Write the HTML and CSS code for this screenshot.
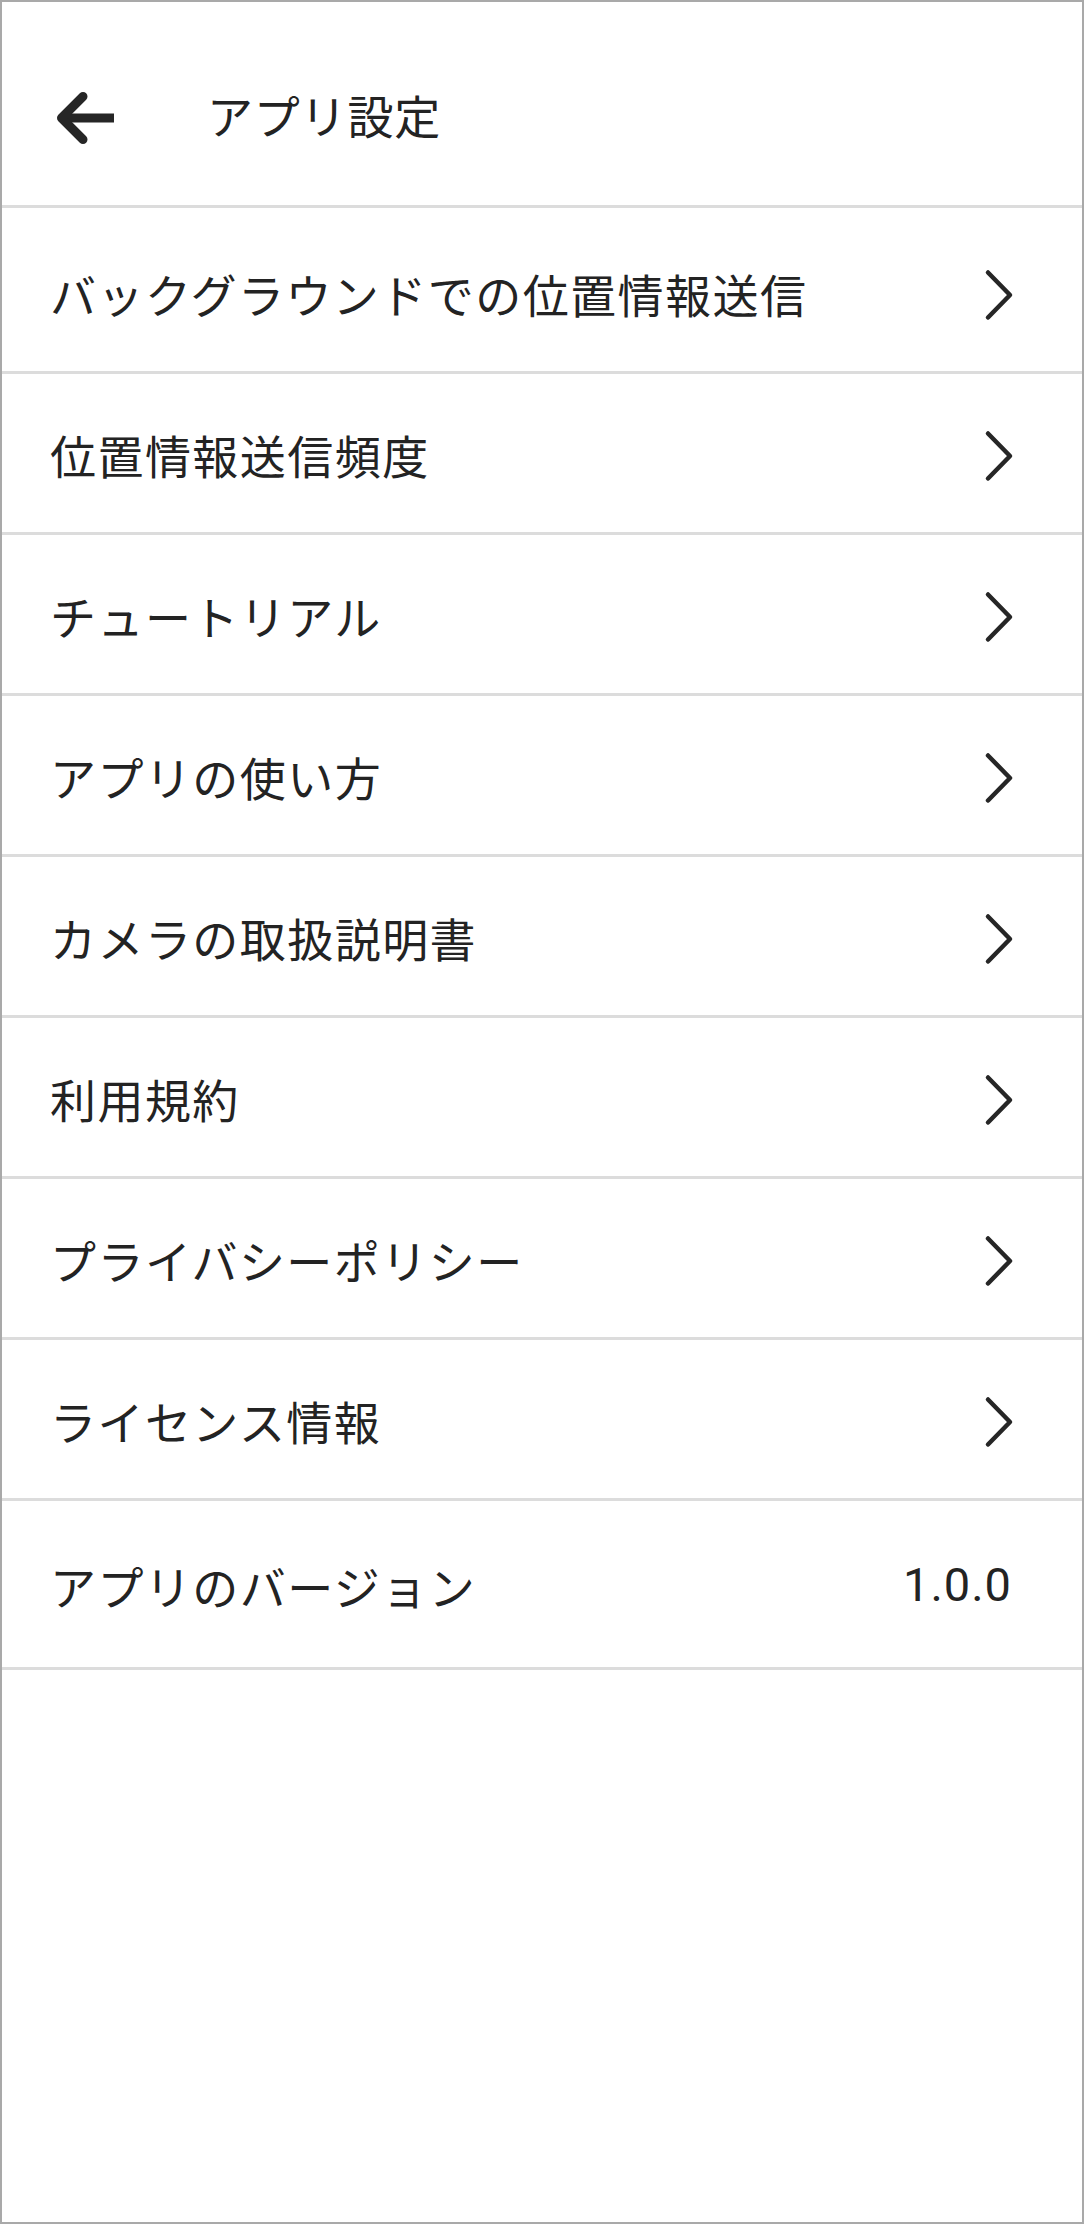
FILE: index.html
```html
<!DOCTYPE html>
<html lang="ja">
<head>
<meta charset="utf-8">
<title>アプリ設定</title>
<link rel="stylesheet" href="styles.css">
</head>
<body>
<div class="screen">
  <header class="appbar">
    <button class="back" aria-label="戻る">
      <svg class="back-icon" width="64" height="64" viewBox="0 0 64 64">
        <path d="M62 32 H14" fill="none" stroke="currentColor" stroke-width="9"/>
        <path d="M31 10.5 L9.5 32 L31 53.5" fill="none" stroke="currentColor" stroke-width="9" stroke-linecap="round" stroke-linejoin="round"/>
      </svg>
    </button>
    <h1 class="title">アプリ設定</h1>
  </header>
  <ul class="menu">
    <li class="item item--first"><span class="label">バックグラウンドでの位置情報送信</span><svg class="chev" width="32" height="52" viewBox="0 0 32 52"><path d="M4 3.5 L26 26 L4 48.5" fill="none" stroke="currentColor" stroke-width="4.5" stroke-linecap="round" stroke-linejoin="round"/></svg></li>
    <li class="item"><span class="label">位置情報送信頻度</span><svg class="chev" width="32" height="52" viewBox="0 0 32 52"><path d="M4 3.5 L26 26 L4 48.5" fill="none" stroke="currentColor" stroke-width="4.5" stroke-linecap="round" stroke-linejoin="round"/></svg></li>
    <li class="item"><span class="label">チュートリアル</span><svg class="chev" width="32" height="52" viewBox="0 0 32 52"><path d="M4 3.5 L26 26 L4 48.5" fill="none" stroke="currentColor" stroke-width="4.5" stroke-linecap="round" stroke-linejoin="round"/></svg></li>
    <li class="item"><span class="label">アプリの使い方</span><svg class="chev" width="32" height="52" viewBox="0 0 32 52"><path d="M4 3.5 L26 26 L4 48.5" fill="none" stroke="currentColor" stroke-width="4.5" stroke-linecap="round" stroke-linejoin="round"/></svg></li>
    <li class="item"><span class="label">カメラの取扱説明書</span><svg class="chev" width="32" height="52" viewBox="0 0 32 52"><path d="M4 3.5 L26 26 L4 48.5" fill="none" stroke="currentColor" stroke-width="4.5" stroke-linecap="round" stroke-linejoin="round"/></svg></li>
    <li class="item"><span class="label">利用規約</span><svg class="chev" width="32" height="52" viewBox="0 0 32 52"><path d="M4 3.5 L26 26 L4 48.5" fill="none" stroke="currentColor" stroke-width="4.5" stroke-linecap="round" stroke-linejoin="round"/></svg></li>
    <li class="item"><span class="label">プライバシーポリシー</span><svg class="chev" width="32" height="52" viewBox="0 0 32 52"><path d="M4 3.5 L26 26 L4 48.5" fill="none" stroke="currentColor" stroke-width="4.5" stroke-linecap="round" stroke-linejoin="round"/></svg></li>
    <li class="item"><span class="label">ライセンス情報</span><svg class="chev" width="32" height="52" viewBox="0 0 32 52"><path d="M4 3.5 L26 26 L4 48.5" fill="none" stroke="currentColor" stroke-width="4.5" stroke-linecap="round" stroke-linejoin="round"/></svg></li>
    <li class="item item--version"><span class="label">アプリのバージョン</span><span class="value">1.0.0</span></li>
  </ul>
</div>
</body>
</html>
```

FILE: styles.css
```css
* { box-sizing: border-box; }
html, body { margin: 0; padding: 0; background: #ffffff; }
body {
  font-family: Roboto, "Noto Sans CJK JP", sans-serif;
  color: #222222;
}
.screen {
  width: 1084px;
  height: 2224px;
  border: 2px solid #a9a9a9;
  background: #ffffff;
  display: flex;
  flex-direction: column;
}
.appbar {
  height: 206px;
  flex: none;
  display: flex;
  align-items: center;
  padding: 28px 0 0 50px;
  border-bottom: 3px solid #dcdcdc;
}
.back {
  border: 0;
  background: none;
  padding: 0;
  margin: 0 91px 0 0;
  color: #262626;
  display: flex;
}
.title {
  margin: 0;
  font-size: 46px;
  font-weight: 400;
  line-height: 1;
  letter-spacing: 0.8px;
  color: #232323;
}
.menu {
  list-style: none;
  margin: 0;
  padding: 0;
}
.item {
  height: 161px;
  display: flex;
  align-items: center;
  justify-content: space-between;
  padding: 10px 66px 0 48px;
  border-bottom: 3px solid #dcdcdc;
}
.item--first { height: 166px; padding-top: 14px; }
.item--version { height: 169px; padding-right: 70px; }
.label {
  font-size: 46px;
  line-height: 1;
  letter-spacing: 1.45px;
  color: #232323;
}
.chev {
  color: #262626;
  flex: none;
  margin-bottom: 4px;
}
.value {
  font-size: 47px;
  line-height: 1;
  letter-spacing: 1px;
  color: #232323;
  margin-bottom: 10px;
}
```
